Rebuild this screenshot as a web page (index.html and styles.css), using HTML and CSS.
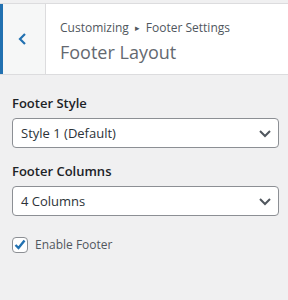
FILE: index.html
```html
<!DOCTYPE html>
<html lang="en">

<head>
    <meta charset="UTF-8">
    <meta name="viewport" content="width=device-width, initial-scale=1.0">
    <title>Footer Layout</title>
    <link rel="stylesheet" href="styles.css">
</head>

<body>
    <div class="section-header">
        <button class="back-btn" aria-label="Back">
            <svg width="12" height="14" viewBox="0 0 12 14">
                <path d="M8 2 L3 7 L8 12" fill="none" stroke="#2271b1" stroke-width="2.2" />
            </svg>
        </button>
        <div class="section-title">
            <span class="crumbs">Customizing<span class="sep">&#9656;</span>Footer Settings</span>
            <h1>Footer Layout</h1>
        </div>
    </div>

    <div class="controls">
        <div class="control">
            <label class="control-label">Footer Style</label>
            <div class="select">
                <span>Style 1 (Default)</span>
                <svg width="14" height="10" viewBox="0 0 14 10">
                    <path d="M2 3 L7 8 L12 3" fill="none" stroke="#50575e" stroke-width="2" />
                </svg>
            </div>
        </div>

        <div class="control">
            <label class="control-label">Footer Columns</label>
            <div class="select">
                <span>4 Columns</span>
                <svg width="14" height="10" viewBox="0 0 14 10">
                    <path d="M2 3 L7 8 L12 3" fill="none" stroke="#50575e" stroke-width="2" />
                </svg>
            </div>
        </div>

        <label class="checkbox-row">
            <span class="checkbox">
                <svg width="14" height="14" viewBox="0 0 14 14">
                    <path d="M2.5 7 L5.5 10 L11.5 2.5" fill="none" stroke="#2271b1" stroke-width="2.4" />
                </svg>
            </span>
            Enable Footer
        </label>
    </div>
</body>

</html>
```

FILE: styles.css
```css
* {
    box-sizing: border-box;
    margin: 0;
    padding: 0;
}

body {
    background-color: #f0f0f1;
    font-family: 'Open Sans', sans-serif;
    color: #50575e;
    padding-top: 3px;
}

.section-header {
    display: flex;
    height: 72px;
    background-color: #fff;
    border-top: 1px solid #dcdcde;
    border-bottom: 1px solid #dcdcde;
}

.back-btn {
    width: 46px;
    background-color: #f6f7f7;
    border: none;
    border-left: 3px solid #2271b1;
    border-right: 1px solid #dcdcde;
    display: flex;
    align-items: center;
    justify-content: center;
    padding-right: 2px;
}

.section-title {
    padding: 14px 0 0 14px;
    display: flex;
    flex-direction: column;
}

.crumbs {
    font-size: 12px;
    line-height: 20px;
    color: #50575e;
}

.sep {
    font-size: 9px;
    margin: 0 6px;
    position: relative;
    top: -1px;
}

.section-title h1 {
    font-size: 18px;
    font-weight: 400;
    line-height: 26px;
    color: #646970;
}

.controls {
    padding: 18px 9px 0 12px;
}

.control {
    margin-bottom: 13px;
}

.control-label {
    display: block;
    font-size: 13px;
    font-weight: 600;
    color: #1d2327;
    line-height: 20px;
    margin-bottom: 5px;
}

.select {
    height: 30px;
    background-color: #fff;
    border: 1px solid #8c8f94;
    border-radius: 4px;
    display: flex;
    align-items: center;
    justify-content: space-between;
    padding: 0 6px 0 8px;
    font-size: 13px;
    color: #2c3338;
}

.checkbox-row {
    display: flex;
    align-items: center;
    gap: 7px;
    font-size: 12px;
    color: #50575e;
    margin-top: 20px;
}

.checkbox {
    width: 16px;
    height: 16px;
    background-color: #fff;
    border: 1px solid #8c8f94;
    border-radius: 4px;
    display: flex;
    align-items: center;
    justify-content: center;
}
```
